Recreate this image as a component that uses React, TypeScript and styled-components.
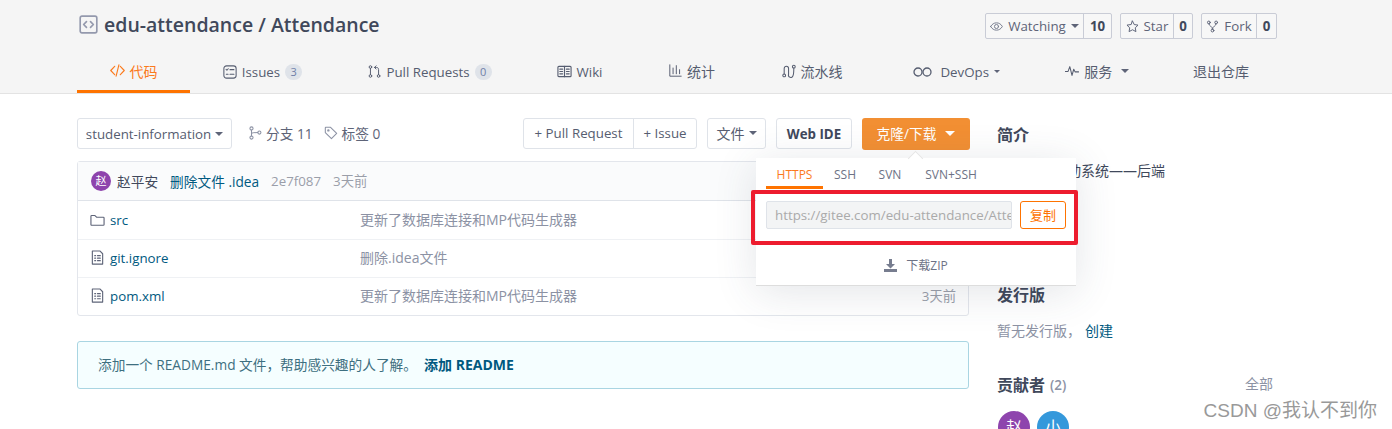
import React from "react";
import styled, { createGlobalStyle } from "styled-components";

const FONT = `"Open Sans", "Noto Sans CJK SC", sans-serif`;
const DARK = "#40485b";
const MUTED = "#8c92a4";
const LINK = "#005980";
const ORANGE = "#fe7300";

const Global = createGlobalStyle`
  html, body { margin: 0; padding: 0; background: #fff; overflow: hidden; }
  body { font-family: ${FONT}; font-size: 14px; color: ${DARK}; }
  * { box-sizing: border-box; }
`;

const Page = styled.div`
  position: relative;
  width: 1392px;
  height: 429px;
  overflow: hidden;
`;
const Header = styled.header`
  height: 94px;
  background: #f5f5f5;
  border-bottom: 1px solid #e3e3e3;
`;
const Wrap = styled.div`
  width: 1200px;
  margin-left: 77px;
`;
const TitleRow = styled.div`
  display: flex;
  justify-content: space-between;
  align-items: flex-start;
  height: 51px;
  padding-top: 13px;
`;
const Title = styled.div`
  display: flex;
  align-items: center;
  gap: 6px;
  margin-top: -1px;
  font-size: 19.5px;
  font-weight: 600;
  line-height: 25px;
  color: ${DARK};
  padding-left: 2px;
`;
const Stats = styled.div`
  display: flex;
  gap: 8px;
`;
const Stat = styled.div`
  display: flex;
  height: 26px;
  border: 1px solid #c9ccd6;
  border-radius: 2px;
  font-size: 13.3px;
  line-height: 24px;
  color: #5e6478;
  background: #f7f7f7;
`;
const StatLabel = styled.span<{ $w: number }>`
  display: flex;
  align-items: center;
  justify-content: center;
  gap: 5px;
  width: ${(p) => p.$w}px;
  border-right: 1px solid #c9ccd6;
`;
const StatCount = styled.b<{ $w: number }>`
  width: ${(p) => p.$w}px;
  text-align: center;
  font-weight: 700;
  color: ${DARK};
`;
const Tabs = styled.nav`
  display: flex;
  height: 42px;
`;
const Tab = styled.a<{ $w: number; $active?: boolean; $cjk?: boolean }>`
  display: flex;
  align-items: center;
  justify-content: center;
  gap: 5px;
  width: ${(p) => p.$w}px;
  flex: none;
  height: 42px;
  padding-top: ${(p) => (p.$cjk ? 0 : 2)}px;
  font-size: ${(p) => (p.$cjk ? 14 : 13.3)}px;
  white-space: nowrap;
  color: ${(p) => (p.$active ? "#fb7a1d" : "#565d70")};
  border-bottom: 3px solid ${(p) => (p.$active ? ORANGE : "transparent")};
`;
const Pill = styled.span`
  display: inline-block;
  min-width: 17px;
  height: 16px;
  padding: 0 5px;
  border-radius: 8px;
  background: #dfe3e9;
  color: #6f7fa8;
  font-size: 11px;
  line-height: 16px;
  text-align: center;
`;
const Caret = styled.i<{ $c?: string; $s?: number }>`
  display: inline-block;
  width: 0;
  height: 0;
  border-left: ${(p) => p.$s ?? 4}px solid transparent;
  border-right: ${(p) => p.$s ?? 4}px solid transparent;
  border-top: ${(p) => p.$s ?? 4}px solid ${(p) => p.$c ?? "#5e6478"};
`;
const Body = styled.div`
  display: flex;
  gap: 28px;
  width: 1200px;
  margin-left: 77px;
  padding-top: 24px;
`;
const Main = styled.main`
  width: 892px;
  flex: none;
`;
const Toolbar = styled.div`
  display: flex;
  align-items: flex-start;
  height: 43px;
  margin-right: -1px;
`;
const Btn = styled.div<{ $w: number; $ml?: number; $bold?: boolean; $cjk?: boolean }>`
  display: flex;
  align-items: center;
  justify-content: center;
  gap: 4px;
  flex: none;
  width: ${(p) => p.$w}px;
  height: 31px;
  margin-left: ${(p) => p.$ml ?? 0}px;
  padding-bottom: ${(p) => (p.$cjk ? 2 : 0)}px;
  border: 1px solid #dfe3e9;
  border-radius: 3px;
  font-size: ${(p) => (p.$cjk ? 14 : 13.3)}px;
  font-weight: ${(p) => (p.$bold ? 700 : 400)};
  white-space: nowrap;
  color: ${(p) => (p.$bold ? DARK : "#565d70")};
  background: #fff;
`;
const BtnGroup = styled.div`
  display: flex;
  flex: none;
  margin-left: auto;
  height: 31px;
  width: 174px;
  border: 1px solid #dfe3e9;
  border-radius: 3px;
  font-size: 13.3px;
  line-height: 29px;
  color: #565d70;
`;
const GroupPart = styled.span<{ $w?: number }>`
  width: ${(p) => (p.$w ? `${p.$w}px` : "auto")};
  flex: ${(p) => (p.$w ? "none" : 1)};
  text-align: center;
  white-space: nowrap;
  & + & { border-left: 1px solid #dfe3e9; }
`;
const Meta = styled.span<{ $ml: number }>`
  display: flex;
  align-items: center;
  gap: 4px;
  height: 29px;
  margin-left: ${(p) => p.$ml}px;
  font-size: 13.7px;
  color: #5e6478;
  white-space: nowrap;
`;
const CloneWrap = styled.div`
  position: relative;
  flex: none;
  margin-left: 10px;
  width: 108px;
`;
const CloneBtn = styled.div`
  display: flex;
  align-items: center;
  justify-content: center;
  gap: 9px;
  height: 32px;
  padding-bottom: 2px;
  border-radius: 3px;
  background: #f28f33;
  color: #fff;
  font-size: 13.7px;
`;
const Dropdown = styled.div`
  position: absolute;
  z-index: 5;
  left: -106px;
  top: 40px;
  width: 320px;
  height: 128px;
  background: #fff;
  border-bottom: 1px solid #ddd;
  box-shadow: 0 6px 40px rgba(60, 70, 90, 0.14);
  padding: 0 10px;
  &::before {
    content: "";
    position: absolute;
    left: 154px;
    top: -5px;
    width: 10px;
    height: 10px;
    background: #fff;
    transform: rotate(45deg);
    border: 1px solid #e6e6e6;
    border-right: 0;
    border-bottom: 0;
  }
`;
const DropTabs = styled.div`
  position: relative;
  display: flex;
  height: 31px;
`;
const DropTab = styled.span<{ $w: number; $active?: boolean }>`
  width: ${(p) => p.$w}px;
  height: 31px;
  flex: none;
  text-align: center;
  font-size: 12px;
  line-height: 33px;
  color: ${(p) => (p.$active ? "#fb7a1d" : "#6d7285")};
  border-bottom: 3px solid ${(p) => (p.$active ? ORANGE : "transparent")};
`;
const UrlRow = styled.div`
  display: flex;
  gap: 8px;
  margin-top: 12px;
`;
const UrlInput = styled.div`
  width: 246px;
  height: 28px;
  padding: 0 8px;
  background: #f3f4f5;
  border: 1px solid #dfe3e9;
  border-radius: 2px;
  color: #aaa;
  font-size: 13.3px;
  line-height: 26px;
  white-space: nowrap;
  overflow: hidden;
`;
const CopyBtn = styled.div`
  width: 46px;
  height: 28px;
  border: 1px solid ${ORANGE};
  border-radius: 3px;
  text-align: center;
  color: ${ORANGE};
  font-size: 13px;
  line-height: 26px;
`;
const ZipRow = styled.div`
  display: flex;
  align-items: center;
  justify-content: center;
  gap: 9px;
  margin-top: 27px;
  font-size: 12px;
  color: #6d7285;
`;
const Highlight = styled.div`
  position: absolute;
  left: -5px;
  top: 32px;
  width: 327px;
  height: 55px;
  border: 4px solid #ed1c2e;
  border-radius: 2px;
`;
const FileBox = styled.div`
  border: 1px solid #e3e6ec;
  border-radius: 3px;
  height: 155px;
`;
const CommitBar = styled.div`
  display: flex;
  align-items: center;
  height: 39px;
  padding-left: 13px;
  padding-bottom: 1px;
  background: #fafbfc;
  border-bottom: 1px solid #dfe3e9;
  font-size: 13.7px;
  white-space: nowrap;
`;
const Avatar = styled.span<{ $bg: string; $s: number; $fs: number }>`
  display: inline-block;
  flex: none;
  width: ${(p) => p.$s}px;
  height: ${(p) => p.$s}px;
  border-radius: 50%;
  background: ${(p) => p.$bg};
  color: #fff;
  font-size: ${(p) => p.$fs}px;
  line-height: ${(p) => p.$s}px;
  text-align: center;
`;
const Author = styled.span`
  margin-left: 6px;
  color: ${DARK};
`;
const CommitMsg = styled.span`
  margin-left: 12px;
  color: ${LINK};
`;
const Gray = styled.span`
  margin-left: 12px;
  font-size: 13.3px;
  color: #9a9ea9;
`;
const FileRow = styled.div`
  display: flex;
  align-items: center;
  height: 38px;
  padding-left: 12px;
  font-size: 13.3px;
  & + & { border-top: 1px solid #eff1f4; padding-bottom: 2px; }
`;
const FileName = styled.span`
  display: flex;
  align-items: center;
  gap: 5px;
  width: 270px;
  flex: none;
  color: ${LINK};
`;
const FileMsg = styled.span`
  flex: 1;
  padding-bottom: 2px;
  font-size: 14px;
  color: #8c92a4;
`;
const FileTime = styled.span`
  padding-right: 12px;
  color: #9a9ea9;
`;
const Notice = styled.div`
  margin-top: 25px;
  height: 48px;
  padding-left: 20px;
  background: #f5feff;
  border: 1px solid #a9d5e2;
  border-radius: 3px;
  font-size: 13.7px;
  line-height: 46px;
  color: #3d6f80;
`;
const NoticeLink = styled.b`
  margin-left: 7px;
  font-size: 14px;
  font-weight: 700;
  color: ${LINK};
`;
const Side = styled.aside`
  width: 280px;
  flex: none;
`;
const SideTitle = styled.h3<{ $mt: number }>`
  display: flex;
  align-items: center;
  gap: 5px;
  margin: ${(p) => p.$mt}px 0 0;
  font-size: 16px;
  font-weight: 700;
  line-height: 22px;
  color: ${DARK};
`;
const Count = styled.span`
  font-size: 13.5px;
  font-weight: 600;
  color: #8c92a4;
`;
const SideText = styled.p<{ $mt: number }>`
  margin: ${(p) => p.$mt}px 0 0;
  font-size: 14px;
  line-height: 20px;
  color: ${MUTED};
`;
const Intro = styled(SideText)`
  color: ${DARK};
`;
const SideLink = styled.a`
  margin-left: 4px;
  color: ${LINK};
`;
const SideHead = styled.div`
  display: flex;
  justify-content: space-between;
  align-items: flex-start;
  padding-right: 4px;
`;
const AllLink = styled.span`
  margin-top: 32px;
  font-size: 14px;
  color: ${MUTED};
`;
const Avatars = styled.div`
  display: flex;
  gap: 7px;
  margin-top: 15px;
  padding-left: 1px;
`;
const Watermark = styled.div`
  position: absolute;
  right: 15px;
  bottom: 5px;
  font-family: "Liberation Sans", "Noto Sans CJK SC", sans-serif;
  font-size: 19px;
  line-height: 26px;
  color: #999;
  text-shadow: 0 0 2px #fff;
  white-space: nowrap;
`;

type IconProps = { s?: number; c?: string; children: React.ReactNode; w?: number };
const Ico = ({ s = 14, c = "currentColor", w = 1.2, children }: IconProps) => (
  <svg width={s} height={s} viewBox="0 0 16 16" fill="none" stroke={c} strokeWidth={w} strokeLinecap="round" strokeLinejoin="round" style={{ flex: "none" }}>
    {children}
  </svg>
);

const RepoIcon = () => (
  <Ico s={19} c="#9499ad" w={1.4}>
    <rect x="1" y="1" width="14" height="14" rx="1.5" />
    <path d="M6.3 5.6 3.9 8l2.4 2.4M9.7 5.6 12.1 8l-2.4 2.4" />
  </Ico>
);
const CodeIcon = () => (
  <Ico s={15} c="#fb7a1d"><path d="M5 3.5.8 8 5 12.500M11 3.500 15.200 8 11 12.500M9.500 2 6.500 14" /></Ico>
);
const IssueIcon = () => (
  <Ico s={14}><rect x="1" y="1" width="14" height="14" rx="3" /><path d="M3.500 5 4.500 6l1.500-1.700M8 5.300h4.500M3.800 10.500h2M8 10.500h4.500" /></Ico>
);
const PrIcon = () => (
  <Ico s={13}><circle cx="3" cy="2.500" r="1.600" /><circle cx="3" cy="13.500" r="1.600" /><circle cx="13" cy="13.500" r="1.600" /><path d="M3 4.100v7.800M13 11.900V5.500c0-1.500-1-2.500-2.500-2.500H8M10 1 8 3l2 2" /></Ico>
);
const WikiIcon = () => (
  <Ico s={15}><rect x="1" y="2.500" width="14" height="11" rx="1" /><path d="M8 2.500v11M3 5.500h3M3 8h3M3 10.500h3M10 5.500h3M10 8h3M10 10.500h3" /></Ico>
);
const ChartIcon = () => (
  <Ico s={13}><path d="M1 1v14h14M5 5v7M9 2v10M13 7v5" /></Ico>
);
const FlowIcon = () => (
  <Ico s={14}><circle cx="2.500" cy="13" r="1.600" /><circle cx="13.500" cy="3" r="1.600" /><path d="M2.500 11.400V5a2.500 2.500 0 0 1 5 0v7a2.500 2.500 0 0 0 5 1.500c.6-1 1-3 1-8.900" /></Ico>
);
const InfinityIcon = () => (
  <svg width="19" height="10" viewBox="0 0 19 10" fill="none" stroke="currentColor" strokeWidth="1.300" style={{ flex: "none" }}>
    <circle cx="5" cy="5" r="4" /><circle cx="14" cy="5" r="4" />
  </svg>
);
const PulseIcon = () => (
  <Ico s={14}><path d="M0.500 8.500h3L5.500 3l2.500 10 2-7 1.500 3h4" /></Ico>
);
const EyeIcon = () => (
  <Ico s={13} c="#777d8f"><path d="M.8 8C2.500 5 5 3.500 8 3.500S13.500 5 15.200 8c-1.700 3-4.200 4.500-7.200 4.500S2.500 11 .8 8Z" /><circle cx="8" cy="8" r="2.500" /></Ico>
);
const StarIcon = () => (
  <Ico s={13} c="#5e6478"><path d="m8 1.300 2.100 4.300 4.700.7-3.400 3.300.8 4.700L8 12l-4.200 2.300.8-4.700L1.200 6.300l4.700-.7Z" /></Ico>
);
const ForkIcon = () => (
  <Ico s={13} c="#5e6478"><circle cx="3.500" cy="3" r="1.700" /><circle cx="12.500" cy="3" r="1.700" /><circle cx="8" cy="13" r="1.700" /><path d="M3.500 4.700c0 3 4.500 2.500 4.500 6.600M12.500 4.700c0 3-4.500 2.500-4.500 6.600" /></Ico>
);
const BranchIcon = () => (
  <Ico s={14} c="#8c92a4"><circle cx="4" cy="2.800" r="1.800" /><circle cx="4" cy="13.200" r="1.800" /><circle cx="13" cy="7.500" r="1.800" /><path d="M4 4.600v6.800M4 9c0-1.500 3-1.500 7.200-1.500" /></Ico>
);
const TagIcon = () => (
  <Ico s={14} c="#8c92a4"><path d="M1.500 2v5.500l7 7 6-6-7-7H2a.5.5 0 0 0-.5.500Z" /><circle cx="5" cy="5" r=".8" /></Ico>
);
const FolderIcon = () => (
  <Ico s={15} c="#5e6478"><path d="M1 3.500c0-.5.300-.8.800-.8h3.500L7 4.500h7.200c.5 0 .8.300.8.800v7c0 .5-.3.800-.8.800H1.800c-.5 0-.8-.3-.8-.8Z" /></Ico>
);
const FileIcon = () => (
  <Ico s={15} c="#5e6478"><path d="M2.500 1h8l3 3v11h-11ZM5 6h1M8 6h3M5 8.700h1M8 8.700h3M5 11.400h1M8 11.400h3" /></Ico>
);
const DownloadIcon = () => (
  <svg width="13" height="13" viewBox="0 0 13 13" fill="#777d8f" style={{ flex: "none" }}>
    <path d="M5 0h3v5h3L6.500 9.500 2 5h3ZM0 10h13v3H0Z" />
  </svg>
);

export default function App() {
  return (
    <Page>
      <Global />
      <Header>
        <Wrap>
          <TitleRow>
            <Title><RepoIcon />edu-attendance / Attendance</Title>
            <Stats>
              <Stat>
                <StatLabel $w={98}><EyeIcon />Watching<Caret /></StatLabel>
                <StatCount $w={27}>10</StatCount>
              </Stat>
              <Stat>
                <StatLabel $w={53}><StarIcon />Star</StatLabel>
                <StatCount $w={18}>0</StatCount>
              </Stat>
              <Stat>
                <StatLabel $w={55}><ForkIcon />Fork</StatLabel>
                <StatCount $w={19}>0</StatCount>
              </Stat>
            </Stats>
          </TitleRow>
          <Tabs>
            <Tab $w={113} $active $cjk><CodeIcon />代码</Tab>
            <Tab $w={145}><IssueIcon />Issues <Pill>3</Pill></Tab>
            <Tab $w={190}><PrIcon />Pull Requests <Pill>0</Pill></Tab>
            <Tab $w={109}><WikiIcon />Wiki</Tab>
            <Tab $w={116} $cjk><ChartIcon />统计</Tab>
            <Tab $w={124} $cjk><FlowIcon />流水线</Tab>
            <Tab $w={165}><InfinityIcon />&nbsp;DevOps<Caret $s={3.500} /></Tab>
            <Tab $w={116} $cjk><PulseIcon />服务&nbsp;<Caret /></Tab>
            <Tab $w={132} $cjk>退出仓库</Tab>
          </Tabs>
        </Wrap>
      </Header>
      <Body>
        <Main>
          <Toolbar>
            <Btn $w={155}>student-information<Caret /></Btn>
            <Meta $ml={16}><BranchIcon />分支 11</Meta>
            <Meta $ml={11}><TagIcon />标签 0</Meta>
            <BtnGroup>
              <GroupPart $w={109}>+ Pull Request</GroupPart>
              <GroupPart>+ Issue</GroupPart>
            </BtnGroup>
            <Btn $w={59} $ml={10} $cjk>文件<Caret /></Btn>
            <Btn $w={76} $ml={10} $bold>Web IDE</Btn>
            <CloneWrap>
              <CloneBtn>克隆/下载<Caret $c="#fff" $s={5} /></CloneBtn>
              <Dropdown>
                <DropTabs>
                  <DropTab $w={57} $active>HTTPS</DropTab>
                  <DropTab $w={44}>SSH</DropTab>
                  <DropTab $w={46}>SVN</DropTab>
                  <DropTab $w={76}>SVN+SSH</DropTab>
                </DropTabs>
                <UrlRow>
                  <UrlInput>https://gitee.com/edu-attendance/Attendance.git</UrlInput>
                  <CopyBtn>复制</CopyBtn>
                </UrlRow>
                <ZipRow><DownloadIcon />下载ZIP</ZipRow>
                <Highlight />
              </Dropdown>
            </CloneWrap>
          </Toolbar>
          <FileBox>
            <CommitBar>
              <Avatar $bg="#8e44ad" $s={20} $fs={11}>赵</Avatar>
              <Author>赵平安</Author>
              <CommitMsg>删除文件 .idea</CommitMsg>
              <Gray>2e7f087</Gray>
              <Gray>3天前</Gray>
            </CommitBar>
            <FileRow><FileName><FolderIcon />src</FileName><FileMsg>更新了数据库连接和MP代码生成器</FileMsg><FileTime>3天前</FileTime></FileRow>
            <FileRow><FileName><FileIcon />git.ignore</FileName><FileMsg>删除.idea文件</FileMsg><FileTime>3天前</FileTime></FileRow>
            <FileRow><FileName><FileIcon />pom.xml</FileName><FileMsg>更新了数据库连接和MP代码生成器</FileMsg><FileTime>3天前</FileTime></FileRow>
          </FileBox>
          <Notice>添加一个 README.md 文件，帮助感兴趣的人了解。<NoticeLink>添加 README</NoticeLink></Notice>
        </Main>
        <Side>
          <SideTitle $mt={6}>简介</SideTitle>
          <Intro $mt={15}>教育考勤活动系统——后端</Intro>
          <SideTitle $mt={103}>发行版</SideTitle>
          <SideText $mt={15}>暂无发行版，<SideLink>创建</SideLink></SideText>
          <SideHead>
            <SideTitle $mt={33}>贡献者 <Count>(2)</Count></SideTitle>
            <AllLink>全部</AllLink>
          </SideHead>
          <Avatars>
            <Avatar $bg="#8e44ad" $s={32} $fs={16}>赵</Avatar>
            <Avatar $bg="#3498db" $s={32} $fs={16}>小</Avatar>
          </Avatars>
        </Side>
      </Body>
      <Watermark>CSDN @我认不到你</Watermark>
    </Page>
  );
}
